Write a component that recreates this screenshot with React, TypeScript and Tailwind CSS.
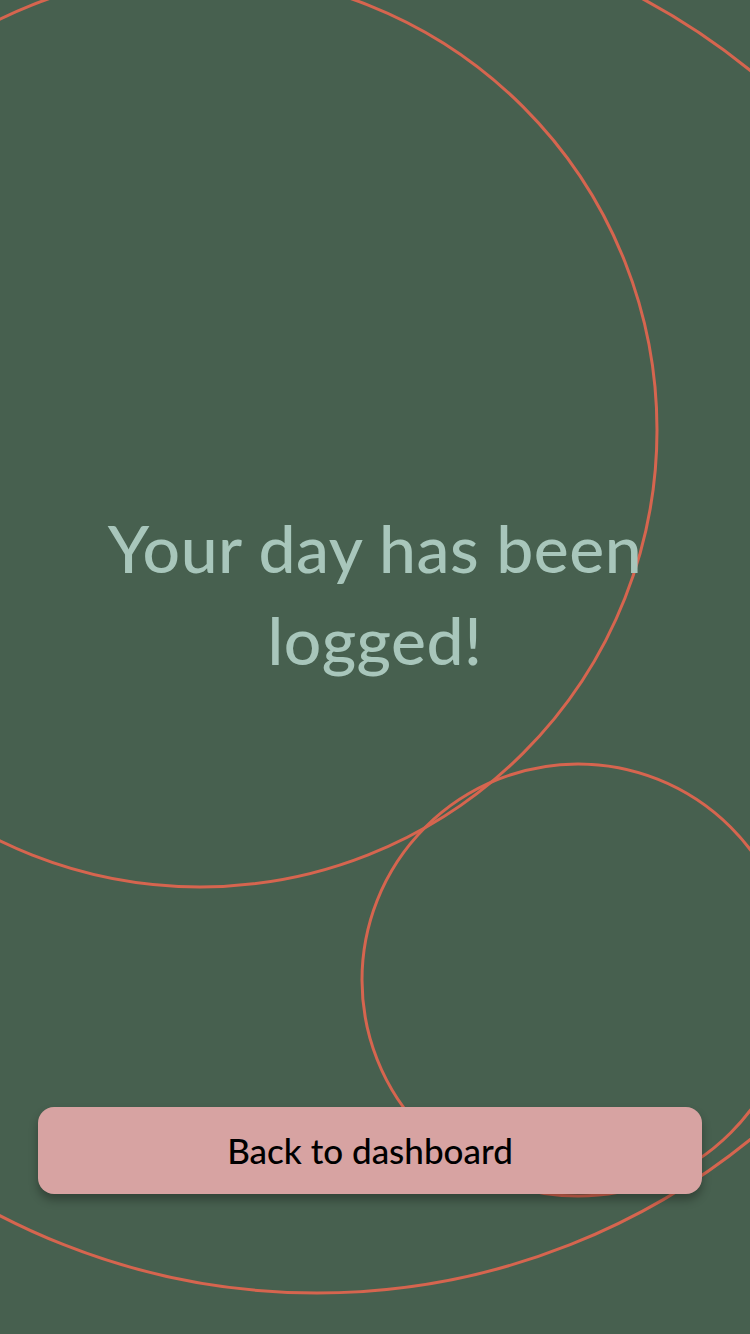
import React from "react";

export default function App() {
  return (
    <div className="relative w-[750px] h-[1334px] overflow-hidden bg-[#47604f] flex flex-col" style={{ fontFamily: "Lato, 'Open Sans', sans-serif" }}>
      <svg className="absolute inset-0" width="750" height="1334" viewBox="0 0 750 1334" fill="none">
        <circle cx="200" cy="430" r="457" stroke="#d6654f" strokeWidth="3" />
        <circle cx="578" cy="980" r="216" stroke="#d6654f" strokeWidth="3" />
        <circle cx="317" cy="605" r="688" stroke="#d6654f" strokeWidth="3" />
      </svg>
      <div className="relative z-10 flex flex-col h-full">
        <div className="pt-[502px] px-10 text-center text-[66px] leading-[92px] text-[#a8c6bb] font-medium tracking-[0.5px]">
          Your day has been
          <br />
          logged!
        </div>
        <div className="flex-1" />
        <div className="pl-[38px] pr-[48px] pb-[140px]">
          <button className="w-full h-[87px] rounded-[16px] bg-[#d7a3a2] text-black text-[35px] font-medium shadow-[0_6px_10px_rgba(0,0,0,0.3)] flex items-center justify-center">
            Back to dashboard
          </button>
        </div>
      </div>
    </div>
  );
}
